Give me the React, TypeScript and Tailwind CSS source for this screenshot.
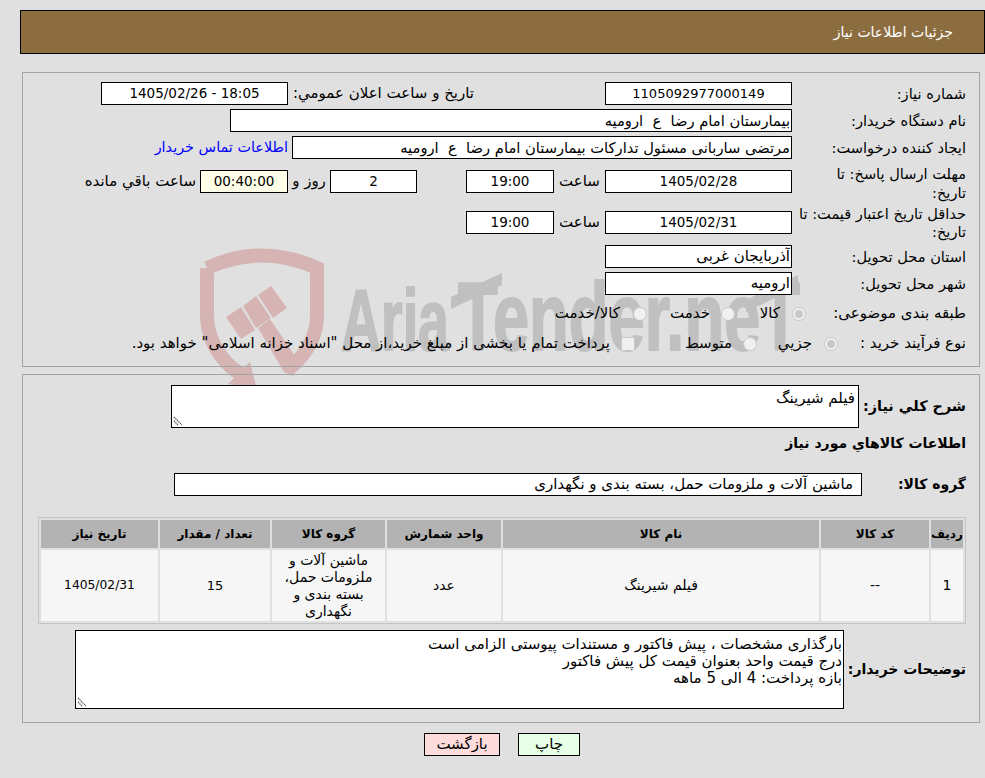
const Box = ({ className = "", children }: { className?: string; children?: React.ReactNode }) => (
  <div className={`bg-white border border-black h-[23px] leading-[21px] whitespace-pre shrink-0 ${className}`}>{children}</div>
);

const Label = ({ className = "", children }: { className?: string; children?: React.ReactNode }) => (
  <div className={`w-[187px] shrink-0 pr-[13px] text-[14.6px] ${className}`}>{children}</div>
);

const Radio = ({ checked = false }: { checked?: boolean }) => (
  <span className="w-[14px] h-[14px] rounded-full border border-[#c8c8c8] bg-[#f0f0f0] flex items-center justify-center shrink-0">
    {checked && <span className="w-[8px] h-[8px] rounded-full bg-[#c8c8c8]" />}
  </span>
);

const Grip = () => (
  <svg className="absolute left-[1px] bottom-[1px]" width="10" height="10" viewBox="0 0 10 10">
    <path d="M1 1l8 8M1 5l4 4" stroke="#555" strokeWidth="1.2" strokeDasharray="1.4 0.7" fill="none" />
  </svg>
);

// viewBox uses page pixels, so the numbers below can be read off the screenshot
const Watermark = () => (
  <svg className="absolute left-[190px] top-[240px] pointer-events-none" width="640" height="150" viewBox="190 240 640 150">
    <g fill="none" stroke="#d6b4b4" strokeWidth="14">
      <path d="M207 268Q262 243 317 268V315Q317 345 290 368" />
      <path d="M207 268V315Q207 345 232 368L246 378" />
    </g>
    <g fill="#d6b4b4">
      <path d="M226 317L241 307L255 330L241 339Z" />
      <path d="M243 306L256 296L271 318L256 328Z" />
      <path d="M258 295L271 286L287 308L273 318Z" />
      <path d="M258 328L270 319L299 362L293 376L284 372Z" />
      <path d="M250 362L257 390L228 384Z" />
    </g>
    <g direction="ltr" textAnchor="start" fill="#c0c0c0" stroke="#c0c0c0" strokeWidth="2" fontFamily="'Liberation Sans',sans-serif" fontWeight="700">
      <text direction="ltr" x="341" y="350" fontSize="88" textLength="108" lengthAdjust="spacingAndGlyphs">Aria</text>
      <text direction="ltr" x="458" y="350" fontSize="96" textLength="342" lengthAdjust="spacingAndGlyphs">Tender.neT</text>
      <path d="M451 297L502 273V285L451 309Z" stroke="none" />
      <path d="M746 300L798 275V287L746 312Z" stroke="none" />
    </g>
  </svg>
);

const headers = [
  ["w-[32px]", "رديف"],
  ["w-[108px]", "کد کالا"],
  ["w-[316px]", "نام کالا"],
  ["w-[114px]", "واحد شمارش"],
  ["w-[113px]", "گروه کالا"],
  ["w-[110px]", "تعداد / مقدار"],
  ["w-[117px]", "تاریخ نیاز"],
];

const cell = "h-[71px] bg-[#f6f6f6] flex items-center justify-center shrink-0";

export default function App() {
  return (
    <div dir="rtl" className="relative w-[985px] h-[778px] overflow-hidden bg-[#e0e0e0] text-black text-[15px] leading-[19px] font-['DejaVu_Sans','Noto_Sans',sans-serif] pt-[10px]">
      <Watermark />

      <div className="w-[965px] h-[44px] bg-[#8c6d40] border border-black text-white text-[14px] flex items-center pr-[31px] pt-[1px]">
        جزئیات اطلاعات نیاز
      </div>

      <div className="relative w-[958px] mr-[5px] mt-[18px] h-[295px] border border-[#a4a4a4] pt-[9px]">
        <div className="flex items-center h-[23px]">
          <Label>شماره نیاز:</Label>
          <Box className="w-[187px] text-center text-[13px]">1105092977000149</Box>
          <div className="w-[317px] pr-[131px] whitespace-nowrap">تاریخ و ساعت اعلان عمومي:</div>
          <Box className="w-[187px] text-center text-[13.5px]">18:05 - 1405/02/26</Box>
        </div>
        <div className="flex items-center h-[23px] mt-[4px]">
          <Label>نام دستگاه خریدار:</Label>
          <Box className="w-[562px] pr-[1px] text-[14.7px]">بیمارستان امام رضا  ع  ارومیه</Box>
        </div>
        <div className="flex items-center h-[23px] mt-[4px]">
          <Label>ایجاد کننده درخواست:</Label>
          <Box className="w-[500px] pr-[1px] text-[14.7px]">مرتضی ساربانی مسئول تدارکات بیمارستان امام رضا  ع  ارومیه</Box>
          <a className="text-[#0000ff] text-[14.4px] mr-[4px] whitespace-nowrap">اطلاعات تماس خریدار</a>
        </div>
        <div className="flex items-start h-[23px] mt-[11px]">
          <Label className="-mt-[6px]">مهلت ارسال پاسخ: تا<br />تاریخ:</Label>
          <Box className="w-[187px] text-center text-[13.5px]">1405/02/28</Box>
          <span className="w-[51px] text-center leading-[23px]">ساعت</span>
          <Box className="w-[88px] text-center text-[13.5px]">19:00</Box>
          <div className="w-[49px]" />
          <Box className="w-[87px] text-center text-[13.5px]">2</Box>
          <span className="w-[42px] text-center leading-[23px]">روز و</span>
          <Box className="w-[88px] text-center text-[13.5px] !bg-[#fefee8]">00:40:00</Box>
          <span className="mr-[4px] leading-[23px] whitespace-nowrap">ساعت باقي مانده</span>
        </div>
        <div className="flex items-start h-[23px] mt-[18px]">
          <Label className="-mt-[6px] leading-[18px]">حداقل تاریخ اعتبار قیمت: تا<br />تاریخ:</Label>
          <Box className="w-[187px] text-center text-[13.5px]">1405/02/31</Box>
          <span className="w-[51px] text-center leading-[23px]">ساعت</span>
          <Box className="w-[88px] text-center text-[13.5px]">19:00</Box>
        </div>
        <div className="flex items-center h-[23px] mt-[11px]">
          <Label>استان محل تحویل:</Label>
          <Box className="w-[187px] pr-[1px]">آذربایجان غربی</Box>
        </div>
        <div className="flex items-center h-[23px] mt-[4px]">
          <Label>شهر محل تحویل:</Label>
          <Box className="w-[187px] pr-[1px]">ارومیه</Box>
        </div>
        <div className="flex items-center h-[23px] mt-[7px]">
          <div className="w-[173px] shrink-0 pr-[13px] whitespace-nowrap">طبقه بندی موضوعی:</div>
          <Radio checked />
          <span className="mr-[12px] w-[45px]">کالا</span>
          <Radio />
          <span className="mr-[11px] w-[63px] ">خدمت</span>
          <Radio />
          <span className="mr-[13px]">کالا/خدمت</span>
        </div>
        <div className="flex items-center h-[23px] mt-[7px] whitespace-nowrap">
          <div className="w-[141px] shrink-0 pr-[13px]">نوع فرآیند خرید :</div>
          <Radio checked />
          <span className="mr-[12px] w-[55px]">جزیي</span>
          <Radio />
          <span className="mr-[11px] w-[97px]">متوسط</span>
          <span className="w-[14px] h-[14px] border border-[#c8c8c8] bg-[#f0f0f0] rounded-[2px] shrink-0" />
          <span className="mr-[11px]">پرداخت تمام یا بخشی از مبلغ خرید،از محل "اسناد خزانه اسلامی" خواهد بود.</span>
        </div>
      </div>

      <div className="relative w-[958px] mr-[5px] mt-[7px] h-[349px] border border-[#a4a4a4] pt-[10px] text-[15px]">
        <div className="flex items-start h-[43px]">
          <div className="w-[120px] shrink-0 pr-[13px] text-[14.4px] font-bold pt-[12px] whitespace-nowrap">شرح کلي نیاز:</div>
          <div className="relative w-[688px] h-[43px] bg-white border border-black pr-[3px] pt-[3px]">
            فیلم شیرینگ
            <Grip />
          </div>
        </div>
        <div className="font-bold text-[14px] pr-[13px] mt-[6px]">اطلاعات کالاهاي مورد نیاز</div>
        <div className="flex items-center h-[23px] mt-[20px]">
          <div className="w-[117px] shrink-0 pr-[13px] text-[14px] font-bold">گروه کالا:</div>
          <Box className="w-[688px] pr-[8px]">ماشین آلات و ملزومات حمل، بسته بندی و نگهداری</Box>
        </div>
        <div className="mt-[21px] mr-[13px] w-[928px] border border-[#c4c4c4] p-[2px] text-[14px]">
          <div className="flex gap-[2px] text-[12px] font-bold">
            {headers.map(([w, t]) => (
              <div key={t} className={`${w} h-[28px] bg-[#b3b3b3] flex items-center justify-center whitespace-nowrap shrink-0`}>{t}</div>
            ))}
          </div>
          <div className="flex gap-[2px] mt-[2px]">
            <div className={`w-[32px] ${cell}`}>1</div>
            <div className={`w-[108px] ${cell}`}>--</div>
            <div className={`w-[316px] ${cell}`}>فیلم شیرینگ</div>
            <div className={`w-[114px] ${cell}`}>عدد</div>
            <div className={`w-[113px] ${cell} text-center leading-[17px] px-[4px]`}>ماشین آلات و ملزومات حمل، بسته بندی و نگهداری</div>
            <div className={`w-[110px] ${cell} text-[13px]`}>15</div>
            <div className={`w-[117px] ${cell} text-[12.3px]`}>1405/02/31</div>
          </div>
        </div>
        <div className="flex items-center mt-[6px]">
          <div className="w-[135px] shrink-0 pr-[13px] text-[14px] font-bold whitespace-nowrap">توضیحات خریدار:</div>
          <div className="relative w-[769px] h-[79px] bg-white border border-black pr-[1px] pt-[5px] leading-[17px]">
            <div>بارگذاری مشخصات ، پیش فاکتور و مستندات پیوستی الزامی است</div>
            <div>درج قیمت واحد بعنوان قیمت کل پیش فاکتور</div>
            <div>بازه پرداخت: 4 الی 5 ماهه</div>
            <Grip />
          </div>
        </div>
      </div>

      <div className="flex gap-[18px] mt-[10px] mr-[405px]">
        <button className="w-[62px] h-[23px] bg-[#e8ffe8] border border-black leading-[21px]">چاپ</button>
        <button className="w-[76px] h-[23px] bg-[#ffdcdc] border border-black leading-[21px]">بازگشت</button>
      </div>
    </div>
  );
}
